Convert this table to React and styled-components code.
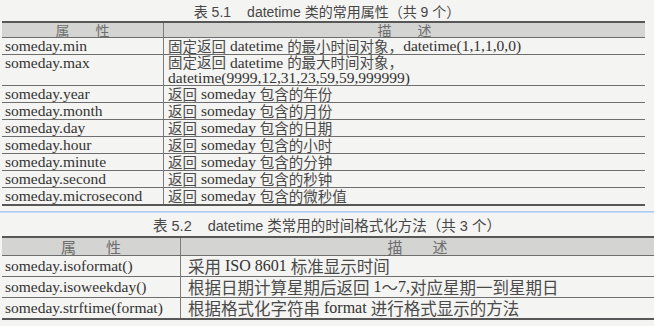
import React from "react";
import styled, { createGlobalStyle } from "styled-components";

const Global = createGlobalStyle`
  html, body { margin: 0; padding: 0; background: #f4f4f2; }
  body { width: 654px; height: 326px; overflow: hidden; }
`;

const Page = styled.div`
  width: 654px;
  height: 326px;
  display: flex;
  flex-direction: column;
  background: #f4f4f2;
  font-family: "Liberation Serif", "Noto Sans CJK SC", serif;
  color: #333;
`;

const Caption = styled.div`
  height: ${(p) => p.$h}px;
  display: flex;
  align-items: center;
  justify-content: center;
  gap: 16px;
  font-family: "Liberation Sans", "Noto Sans CJK SC", sans-serif;
  font-size: ${(p) => p.$fs}px;
  color: #474747;
`;

const Table = styled.div`
  margin-left: 2px;
  width: ${(p) => p.$w}px;
  display: flex;
  flex-direction: column;
  border-top: 2px solid #575757;
  border-bottom: 2px solid #575757;
`;

const Row = styled.div`
  display: grid;
  grid-template-columns: ${(p) => p.$split}px 1fr;
  height: ${(p) => p.$h}px;
  background: ${(p) => (p.$head ? "#d4d4d2" : "transparent")};
  & + & {
    border-top: 1px solid #6e6e6e;
  }
`;

const Cell = styled.div`
  display: flex;
  flex-direction: column;
  justify-content: ${(p) => (p.$top ? "flex-start" : "center")};
  align-items: ${(p) => (p.$head ? "center" : "flex-start")};
  padding-left: ${(p) => (p.$head ? 0 : p.$pad)}px;
  font-size: ${(p) => p.$fs || 15.5}px;
  white-space: nowrap;
  & + & {
    border-left: 1px solid #7c7c7c;
  }
`;

const Line = styled.div`
  height: ${(p) => p.$lh}px;
  display: flex;
  align-items: center;
`;

const Han = styled.span`
  font-family: "Noto Sans CJK SC", sans-serif;
  font-size: ${(p) => p.$size}px;
  line-height: 1;
  color: #4a4a4a;
`;

const Latin = styled.span`
  line-height: 1;
  white-space: pre;
`;

const HeadText = styled.span`
  font-family: "Noto Sans CJK SC", sans-serif;
  font-size: ${(p) => p.$fs}px;
  line-height: 1;
  letter-spacing: ${(p) => p.$sp}px;
  margin-right: -${(p) => p.$sp}px;
  color: #6e6e6e;
`;

const BlueRule = styled.div`
  height: 2px;
  margin-top: 5px;
  background: linear-gradient(to bottom, #9ec3ee, #d3e3f5);
`;

const HAN_RE = /([\u3000-\u9fff\uff00-\uffef～]+)/;

function Mixed({ text, han }) {
  const parts = text.split(HAN_RE).filter(Boolean);
  return parts.map((p, i) =>
    HAN_RE.test(p) ? (
      <Han key={i} $size={han}>
        {p}
      </Han>
    ) : (
      <Latin key={i}>{p}</Latin>
    )
  );
}

const rows1 = [
  ["someday.min", ["固定返回 datetime 的最小时间对象，datetime(1,1,1,0,0)"]],
  ["someday.max", ["固定返回 datetime 的最大时间对象，", "datetime(9999,12,31,23,59,59,999999)"]],
  ["someday.year", ["返回 someday 包含的年份"]],
  ["someday.month", ["返回 someday 包含的月份"]],
  ["someday.day", ["返回 someday 包含的日期"]],
  ["someday.hour", ["返回 someday 包含的小时"]],
  ["someday.minute", ["返回 someday 包含的分钟"]],
  ["someday.second", ["返回 someday 包含的秒钟"]],
  ["someday.microsecond", ["返回 someday 包含的微秒值"]],
];

const rows2 = [
  ["someday.isoformat()", "采用 ISO 8601 标准显示时间"],
  ["someday.isoweekday()", "根据日期计算星期后返回 1～7,对应星期一到星期日"],
  ["someday.strftime(format)", "根据格式化字符串 format 进行格式显示的方法"],
];

function Head({ split, h, fs, sp }) {
  return (
    <Row $head $split={split} $h={h}>
      <Cell $head>
        <HeadText $fs={fs} $sp={sp}>属性</HeadText>
      </Cell>
      <Cell $head>
        <HeadText $fs={fs} $sp={sp}>描述</HeadText>
      </Cell>
    </Row>
  );
}

export default function App() {
  return (
    <Page>
      <Global />
      <Caption $h={21} $fs={14}>
        <span>表 5.1</span>
        <span>datetime 类的常用属性（共 9 个）</span>
      </Caption>
      <Table $w={643}>
        <Head split={161} h={14} fs={14} sp={26} />
        {rows1.map(([k, lines]) => (
          <Row key={k} $split={161} $h={lines.length > 1 ? 30 : 16}>
            <Cell $pad={3} $top>
              <Line $lh={16}>{k}</Line>
            </Cell>
            <Cell $pad={4}>
              {lines.map((l, i) => (
                <Line key={i} $lh={15}>
                  <Mixed text={l} han={14.5} />
                </Line>
              ))}
            </Cell>
          </Row>
        ))}
      </Table>
      <BlueRule />
      <Caption $h={23} $fs={14.5}>
        <span>表 5.2</span>
        <span>datetime 类常用的时间格式化方法（共 3 个）</span>
      </Caption>
      <Table $w={652}>
        <Head split={178} h={17} fs={15} sp={30} />
        {rows2.map(([k, d]) => (
          <Row key={k} $split={178} $h={20}>
            <Cell $pad={3} $fs={15.5}>
              <Line $lh={20}>{k}</Line>
            </Cell>
            <Cell $pad={7} $fs={16}>
              <Line $lh={20}>
                <Mixed text={d} han={16.5} />
              </Line>
            </Cell>
          </Row>
        ))}
      </Table>
    </Page>
  );
}
